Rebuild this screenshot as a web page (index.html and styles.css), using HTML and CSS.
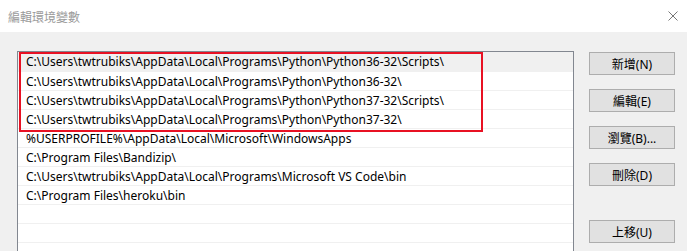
FILE: index.html
```html
<!DOCTYPE html>
<html>
<head>
    <title>編輯環境變數</title>
    <meta charset="utf-8">
    <link rel="stylesheet" href="styles.css">
</head>
<body>
    <div class="titlebar">
        <span class="title">編輯環境變數</span>
        <svg class="close" width="10" height="10" viewBox="0 0 10 10">
            <path d="M0.5 0.5 L9.5 9.5 M9.5 0.5 L0.5 9.5" stroke="#777" stroke-width="1" fill="none"/>
        </svg>
    </div>

    <div class="content">
        <div class="list">
            <div class="row hover">C:\Users\twtrubiks\AppData\Local\Programs\Python\Python36-32\Scripts\</div>
            <div class="row">C:\Users\twtrubiks\AppData\Local\Programs\Python\Python36-32\</div>
            <div class="row">C:\Users\twtrubiks\AppData\Local\Programs\Python\Python37-32\Scripts\</div>
            <div class="row">C:\Users\twtrubiks\AppData\Local\Programs\Python\Python37-32\</div>
            <div class="row">%USERPROFILE%\AppData\Local\Microsoft\WindowsApps</div>
            <div class="row">C:\Program Files\Bandizip\</div>
            <div class="row">C:\Users\twtrubiks\AppData\Local\Programs\Microsoft VS Code\bin</div>
            <div class="row">C:\Program Files\heroku\bin</div>
            <div class="row"></div>
            <div class="row"></div>
            <div class="row"></div>

            <div class="mark"></div>
        </div>

        <div class="buttons">
            <button>新增(N)</button>
            <button>編輯(E)</button>
            <button>瀏覽(B)...</button>
            <button>刪除(D)</button>
            <button class="spaced">上移(U)</button>
        </div>
    </div>
</body>
</html>
```

FILE: styles.css
```css
html, body {
    margin: 0;
    height: 100%;
    overflow: hidden;
    background: #f0f0f0;
    font-family: "Noto Sans", "Noto Sans CJK TC", sans-serif;
    font-size: 12px;
}

.titlebar {
    display: flex;
    align-items: center;
    justify-content: space-between;
    height: 32px;
    padding: 0 9px 0 8px;
    background: #fff;
    box-sizing: border-box;
}

.title {
    color: #9a9a9a;
    font-family: "Noto Sans CJK TC", sans-serif;
    font-size: 12px;
}

.close {
    display: block;
}

.content {
    display: flex;
    align-items: flex-start;
    padding: 19px 12px 0 17px;
}

.list {
    position: relative;
    width: 557px;
    height: 200px;
    box-sizing: border-box;
    border: 1px solid #828790;
    border-bottom: none;
    background: #fff;
    overflow: hidden;
}

.row {
    height: 19px;
    line-height: 19px;
    padding-left: 8px;
    border-bottom: 1px solid #f0f0f0;
    box-sizing: border-box;
    color: #000;
    white-space: nowrap;
}

.row.hover {
    background: #f0f0f0;
    height: 20px;
    line-height: 20px;
}

.mark {
    position: absolute;
    left: 1px;
    top: 0;
    width: 464px;
    height: 80px;
    box-sizing: border-box;
    border: 2px solid #e81123;
}

.buttons {
    display: flex;
    flex-direction: column;
    gap: 14px;
    margin-left: 15px;
    padding-top: 1px;
}

button {
    appearance: none;
    -webkit-appearance: none;
    width: 86px;
    height: 23px;
    margin: 0;
    padding: 0;
    border: 1px solid #adadad;
    background: #e1e1e1;
    color: #000;
    font-family: "Noto Sans", "Noto Sans CJK TC", sans-serif;
    font-size: 12px;
}

button.spaced {
    margin-top: 20px;
}
```
